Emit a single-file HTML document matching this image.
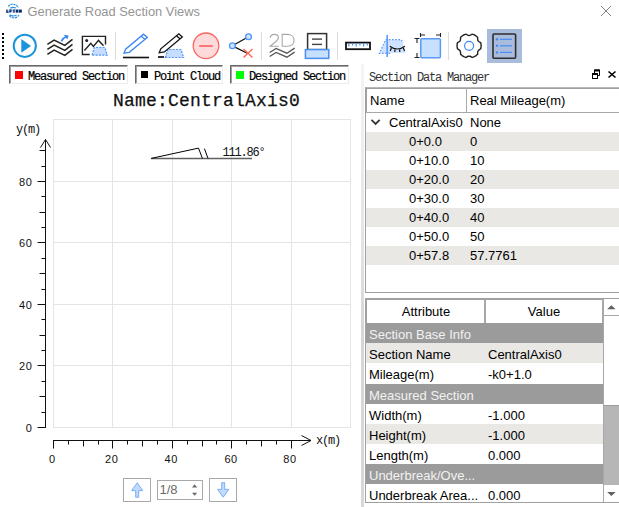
<!DOCTYPE html>
<html><head><meta charset="utf-8">
<style>
html,body{margin:0;padding:0;width:619px;height:507px;overflow:hidden;background:#fff;position:relative;font-family:"Liberation Sans",sans-serif;}
.a{position:absolute;white-space:nowrap;}
.mono{font-family:"Liberation Mono",monospace;}
svg{position:absolute;left:0;top:0;}
.leg{position:absolute;top:65px;height:17px;border-top:1px solid #6a6a6a;border-left:1px solid #6a6a6a;border-bottom:1px solid #ebebeb;border-right:1px solid #ebebeb;box-shadow:inset 1px 1px 0 #a0a0a0;background:#fff;}
.leg .sq{position:absolute;left:5px;top:5px;width:8px;height:8px;}
.leg .t{position:absolute;left:18px;top:3px;font:12px "Liberation Mono",monospace;letter-spacing:-1.2px;color:#000;line-height:16px;-webkit-text-stroke:0.2px #000;}
.lbl{font:12px "Liberation Mono",monospace;letter-spacing:-1.2px;color:#111;line-height:14px;}
.tt{font-size:13px;line-height:15px;color:#000;}
.num{font:11px "Liberation Sans",sans-serif;color:#111;line-height:14px;letter-spacing:0.6px;}
</style></head><body>
<!-- title bar -->
<svg width="619" height="507" viewBox="0 0 619 507">
 <!-- logo -->
 <g fill="none" stroke="#2a8ee0" stroke-width="1.2">
  <path d="M8.3,6.6 C9.5,3.8 14.5,2.6 18.6,7.6" stroke-dasharray="2.2,0.8"/>
  <path d="M10.4,8.3 C11.6,7.3 14.2,7.2 15.8,8"/>
  <path d="M9.6,14.6 C11,16.2 14.5,16.5 16.5,15"/>
  <path d="M9.3,15.5 C11.5,18.8 16.5,18.8 19,15" stroke-dasharray="2.4,0.8"/>
 </g>
 <rect x="6" y="9.2" width="16" height="3.8" fill="#d6e8ff"/>
 <g fill="#0b2a66">
  <rect x="6.3" y="9.6" width="1.3" height="3"/><rect x="6.3" y="11.6" width="2.6" height="1"/>
  <rect x="9.5" y="9.6" width="2.4" height="1"/><rect x="9.5" y="9.6" width="1.1" height="3"/><rect x="9.5" y="11" width="2" height="0.9"/>
  <rect x="12.6" y="9.6" width="2.6" height="1"/><rect x="13.3" y="10.5" width="1.3" height="2.2"/>
  <rect x="15.8" y="9.6" width="2.6" height="3" /><rect x="19" y="9.6" width="2.8" height="3"/>
 </g>
 <!-- close -->
 <path d="M601,6 L611,16 M611,6 L601,16" stroke="#858585" stroke-width="1"/>
 <!-- toolbar -->
 <g fill="#000">
  <rect x="2" y="33" width="2" height="2"/><rect x="2" y="37" width="2" height="2"/><rect x="2" y="41" width="2" height="2"/><rect x="2" y="45" width="2" height="2"/><rect x="2" y="49" width="2" height="2"/><rect x="2" y="53" width="2" height="2"/><rect x="2" y="57" width="2" height="2"/>
 </g>
 <!-- play -->
 <circle cx="24.8" cy="45.8" r="11.1" fill="none" stroke="#1a94dc" stroke-width="2"/>
 <path d="M21.3,39 L31,46 L21.3,52.8Z" fill="#1a94dc"/>
 <!-- waves -->
 <g fill="none" stroke="#222" stroke-width="1.5">
  <path d="M47.4,44.4 L54.1,40.1 L64.8,45.4 L72.5,39.4"/>
  <path d="M47.4,49.4 L54.1,45.1 L64.8,50.4 L72.5,44.4"/>
  <path d="M47.4,54.4 L54.1,50.1 L64.8,55.4 L72.5,49.4"/>
 </g>
 <path d="M61.3,41.4 Q63.5,37.5 67,36.3" fill="none" stroke="#3b86f5" stroke-width="1.6"/>
 <path d="M63.8,34.8 L68.7,35.6 L67.2,39.6Z" fill="#3b86f5"/>
 <!-- image icon -->
 <g fill="none" stroke="#222" stroke-width="1.4">
  <path d="M89.7,54.5 L82.4,54.5 L82.4,36.4 L105.5,36.4 L105.5,44.4"/>
  <path d="M84.4,50.5 L90.8,43.4 L93.4,46.5 L98.5,40.4 L103.5,45.8"/>
 </g>
 <circle cx="86.7" cy="40.4" r="1.5" fill="#222"/>
 <path d="M92.1,55.2 L94.1,47.5 L104.8,47.5 L107.2,55.2Z" fill="#c7ddff" stroke="#4f95f7" stroke-width="1.2" stroke-dasharray="2,1.3"/>
 <!-- separators -->
 <g fill="#dcdcdc">
  <rect x="115" y="32" width="1" height="28"/>
  <rect x="261" y="32" width="1" height="28"/>
  <rect x="337" y="32" width="1" height="28"/>
  <rect x="448" y="32" width="1" height="28"/>
 </g>
 <!-- blue pencil -->
 <g fill="none" stroke="#3b86f5" stroke-width="1.3">
  <path d="M124,53.2 L125.6,49.2 L143.5,34.2 L147.3,37.6 L129.2,52.3Z"/>
  <path d="M141.2,36.2 L145.2,39.5"/>
 </g>
 <rect x="123" y="56.7" width="26" height="1.6" fill="#111"/>
 <!-- black pencil w/ area -->
 <path d="M165.4,57.5 L167.8,49.5 L180.9,49.5 L183.6,57.5Z" fill="#c7ddff" stroke="#4f95f7" stroke-width="1.2" stroke-dasharray="2,1.3"/>
 <g fill="none" stroke="#111" stroke-width="1.3">
  <path d="M159.2,52.8 L160.8,48.8 L178.8,33.8 L182.3,37 L164.4,52Z"/>
  <path d="M176.5,35.7 L180.2,39"/>
 </g>
 <rect x="158" y="56" width="6" height="2" fill="#333"/>
 <!-- minus circle -->
 <circle cx="206" cy="45.8" r="12.8" fill="#ffdada" stroke="#ff6464" stroke-width="1.3"/>
 <rect x="199.2" y="45" width="13.6" height="2" fill="#ff7676"/>
 <!-- node delete -->
 <g stroke="#111" stroke-width="1.3" fill="none">
  <path d="M232.4,45.8 L248.5,36.7 M232.4,45.8 L247.8,53.5"/>
 </g>
 <circle cx="248.5" cy="36.7" r="2.9" fill="#cfe2ff" stroke="#4f95f7" stroke-width="1.3"/>
 <circle cx="232.4" cy="45.8" r="2.9" fill="#cfe2ff" stroke="#4f95f7" stroke-width="1.3"/>
 <path d="M243.5,49.1 L252.5,57.5 M252.5,49.1 L243.5,57.5" stroke="#ff6a5a" stroke-width="1.4"/>
 <!-- 2D -->
 <path d="M270.1,37.9 C270.5,35.5 272.3,34.4 274.3,34.4 C276.6,34.4 278.4,35.7 278.4,37.7 C278.4,39.7 276.8,40.9 275,42.3 L270.1,46.3 L278.7,46.3 M282.2,34.4 L282.2,46.3 L287.3,46.3 C291.4,46.3 294.1,43.8 294.1,40.35 C294.1,36.9 291.4,34.4 287.3,34.4 Z" fill="none" stroke="#a8a8a8" stroke-width="1.1"/>
 <g fill="none" stroke="#555" stroke-width="1.3">
  <path d="M269.7,52.5 L276.1,48.5 L286.9,53.2 L294.6,48.1"/>
  <path d="M269.7,56.5 L276.1,52.5 L286.9,57.2 L294.6,52.1"/>
 </g>
 <!-- document -->
 <rect x="307.6" y="33.6" width="19" height="16" fill="#fff" stroke="#333" stroke-width="1.5"/>
 <rect x="312" y="38.4" width="10" height="1.4" fill="#444"/>
 <rect x="312" y="43.7" width="10" height="1.4" fill="#444"/>
 <rect x="305.4" y="49.6" width="23.4" height="8.8" fill="#c8e0ff" stroke="#4a90f0" stroke-width="1.5"/>
 <!-- ruler -->
 <rect x="346" y="42.6" width="24" height="6.6" fill="#fff" stroke="#111" stroke-width="1.8"/>
 <g fill="#4a90f0">
  <rect x="348.2" y="43.5" width="1.2" height="3"/><rect x="352" y="43.5" width="1.2" height="2"/><rect x="355.6" y="43.5" width="1.2" height="3"/><rect x="359.3" y="43.5" width="1.2" height="2"/><rect x="363" y="43.5" width="1.2" height="3"/><rect x="366.7" y="43.5" width="1.2" height="2"/>
 </g>
 <!-- eye hidden -->
 <path d="M379.4,53.5 L385.7,39.7 L401.5,39.7 L405.9,52.8 Z" fill="#cfe2ff"/>
 <path d="M390,53.3 L379.4,53.3 L385.7,39.7 L401.5,39.7 L403,43" fill="none" stroke="#4f95f7" stroke-width="1.2" stroke-dasharray="1.5,1.7"/>
 <rect x="386.4" y="35" width="1.5" height="22" fill="#4f95f7"/>
 <g fill="none" stroke="#111" stroke-width="1.2">
  <path d="M389.8,46.2 Q397.3,51.8 404.9,46.2"/>
  <path d="M391.4,48 L390.2,50.9 M395,49.4 L394.8,52 M399.6,49.4 L399.8,52 M403.3,48 L404.6,50.9"/>
 </g>
 <!-- square w dims -->
 <rect x="420.8" y="38.8" width="19.6" height="19" rx="1" fill="#c8e0ff" stroke="#5a9af5" stroke-width="1.5"/>
 <g fill="none" stroke="#222" stroke-width="1.1">
  <path d="M420.5,33 L420.5,37 M420.5,35 L425,35 M440.5,33 L440.5,37 M436,35 L440.5,35"/>
  <path d="M414.5,38.5 L419.5,38.5 M417,38.5 L417,43 M414.5,57.5 L419.5,57.5 M417,57.5 L417,53"/>
 </g>
 <!-- gear -->
 <path d="M481.1,45.8 L481.1,45.0 L481.0,44.2 L480.9,43.5 L480.7,42.7 L479.8,42.2 L479.1,41.7 L478.5,41.2 L478.0,40.6 L477.8,40.0 L477.7,39.2 L477.6,38.3 L477.6,37.3 L477.0,36.8 L476.4,36.3 L475.8,35.8 L475.1,35.4 L474.4,35.0 L473.7,34.7 L473.0,34.4 L472.2,34.2 L471.3,34.7 L470.5,35.1 L469.8,35.4 L469.1,35.5 L468.4,35.4 L467.7,35.1 L466.9,34.7 L466.0,34.2 L465.2,34.4 L464.5,34.7 L463.8,35.0 L463.1,35.4 L462.4,35.8 L461.8,36.3 L461.2,36.8 L460.6,37.3 L460.6,38.3 L460.5,39.2 L460.4,40.0 L460.2,40.6 L459.7,41.2 L459.1,41.7 L458.4,42.2 L457.5,42.7 L457.3,43.5 L457.2,44.2 L457.1,45.0 L457.1,45.8 L457.1,46.6 L457.2,47.4 L457.3,48.1 L457.5,48.9 L458.4,49.4 L459.1,49.9 L459.7,50.4 L460.2,50.9 L460.4,51.6 L460.5,52.4 L460.6,53.3 L460.6,54.3 L461.2,54.8 L461.8,55.3 L462.4,55.8 L463.1,56.2 L463.8,56.6 L464.5,56.9 L465.2,57.2 L466.0,57.4 L466.9,56.9 L467.7,56.5 L468.4,56.2 L469.1,56.1 L469.8,56.2 L470.5,56.5 L471.3,56.9 L472.2,57.4 L473.0,57.2 L473.7,56.9 L474.4,56.6 L475.1,56.2 L475.8,55.8 L476.4,55.3 L477.0,54.8 L477.6,54.3 L477.6,53.3 L477.7,52.4 L477.8,51.6 L478.0,51.0 L478.5,50.4 L479.1,49.9 L479.8,49.4 L480.7,48.9 L480.9,48.1 L481.0,47.4 L481.1,46.6Z" fill="none" stroke="#222" stroke-width="1.4"/>
 <circle cx="469.1" cy="45.8" r="4.5" fill="none" stroke="#3a8af5" stroke-width="1.2"/>
 <!-- list (active) -->
 <rect x="487" y="29" width="35" height="34" fill="#a9bcdb"/>
 <rect x="493" y="34" width="22.6" height="24.2" rx="1" fill="none" stroke="#2e2e2e" stroke-width="1.6"/>
 <g fill="#4a8af5">
  <circle cx="497" cy="39.3" r="1.25"/><circle cx="497" cy="45.8" r="1.25"/><circle cx="497" cy="52.4" r="1.25"/>
  <rect x="500" y="38.7" width="12" height="1.2"/><rect x="500" y="45.2" width="12" height="1.2"/><rect x="500" y="51.8" width="12" height="1.2"/>
 </g>
</svg>
<div class="a" style="left:27.5px;top:5px;font-size:12.9px;color:#959595;line-height:14px;">Generate Road Section Views</div>

<!-- legends -->
<div class="leg" style="left:9px;width:117px;"><div class="sq" style="background:#f00"></div><div class="t">Measured Section</div></div>
<div class="leg" style="left:135px;width:86px;"><div class="sq" style="background:#000;left:5px;top:5px;width:7px;height:7px"></div><div class="t">Point Cloud</div></div>
<div class="leg" style="left:230px;width:117px;"><div class="sq" style="background:#0f0"></div><div class="t">Designed Section</div></div>

<svg width="619" height="507" viewBox="0 0 619 507">
<path d="M53.5,119 L53.5,428 M112.5,119 L112.5,428 M172.5,119 L172.5,428 M231.5,119 L231.5,428 M291.5,119 L291.5,428 M350.5,119 L350.5,428 M53,427.5 L351,427.5 M53,365.5 L351,365.5 M53,304.5 L351,304.5 M53,242.5 L351,242.5 M53,181.5 L351,181.5 M53,119.5 L351,119.5" stroke="#e4e4e4" stroke-width="1" fill="none"/>
<path d="M45.5,139.5 L45.5,428 M37.5,427.5 L45.5,427.5 M41.5,412.5 L45.5,412.5 M39.5,396.5 L45.5,396.5 M41.5,381.5 L45.5,381.5 M37.5,365.5 L45.5,365.5 M41.5,350.5 L45.5,350.5 M39.5,335.5 L45.5,335.5 M41.5,319.5 L45.5,319.5 M37.5,304.5 L45.5,304.5 M41.5,289.5 L45.5,289.5 M39.5,273.5 L45.5,273.5 M41.5,258.5 L45.5,258.5 M37.5,242.5 L45.5,242.5 M41.5,227.5 L45.5,227.5 M39.5,212.5 L45.5,212.5 M41.5,196.5 L45.5,196.5 M37.5,181.5 L45.5,181.5 M41.5,166.5 L45.5,166.5 M39.5,150.5 L45.5,150.5 M40.5,147.5 L45.5,139.5 L50.5,147.5 M53,440.5 L311,440.5 M53.5,440.5 L53.5,448.5 M68.5,440.5 L68.5,444.5 M83.5,440.5 L83.5,446.5 M98.5,440.5 L98.5,444.5 M112.5,440.5 L112.5,448.5 M127.5,440.5 L127.5,444.5 M142.5,440.5 L142.5,446.5 M157.5,440.5 L157.5,444.5 M172.5,440.5 L172.5,448.5 M187.5,440.5 L187.5,444.5 M202.5,440.5 L202.5,446.5 M216.5,440.5 L216.5,444.5 M231.5,440.5 L231.5,448.5 M246.5,440.5 L246.5,444.5 M261.5,440.5 L261.5,446.5 M276.5,440.5 L276.5,444.5 M291.5,440.5 L291.5,448.5 M301.5,435.5 L311,440.5 L301.5,445.5" stroke="#111" stroke-width="1" fill="none"/>
<path d="M151.2,158.5 L252,158.5" stroke="#606060" stroke-width="1.6"/>
<path d="M151.2,158.4 L198.5,148.1 L202.4,158.4 M204.4,148.6 L208,158.4" stroke="#000" stroke-width="1" fill="none"/>
</svg>
<!-- chart labels -->
<div class="a mono" style="left:113px;top:91px;font-size:18px;-webkit-text-stroke:0.25px #111;line-height:20px;letter-spacing:0.2px;color:#111;">Name:CentralAxis0</div>
<div class="a lbl" style="left:16px;top:122.5px;">y(m)</div>
<div class="a num" style="left:0px;top:175px;width:32.5px;text-align:right;">80</div>
<div class="a num" style="left:0px;top:236px;width:32.5px;text-align:right;">60</div>
<div class="a num" style="left:0px;top:298px;width:32.5px;text-align:right;">40</div>
<div class="a num" style="left:0px;top:359px;width:32.5px;text-align:right;">20</div>
<div class="a num" style="left:0px;top:421px;width:32.5px;text-align:right;">0</div>
<div class="a num" style="left:32.3px;top:452px;width:40px;text-align:center;">0</div>
<div class="a num" style="left:91.7px;top:452px;width:40px;text-align:center;">20</div>
<div class="a num" style="left:151.2px;top:452px;width:40px;text-align:center;">40</div>
<div class="a num" style="left:211.1px;top:452px;width:40px;text-align:center;">60</div>
<div class="a num" style="left:269.9px;top:452px;width:40px;text-align:center;">80</div>
<div class="a lbl" style="left:316px;top:434px;">x(m)</div>
<div class="a lbl" style="left:222.5px;top:146px;">111.86&deg;</div>
<!-- pager -->
<div class="a" style="left:123px;top:478px;width:26px;height:22px;border:1px solid #a8a8a8;"></div>
<svg width="619" height="507" viewBox="0 0 619 507">
 <path d="M131.6,490.6 L137.2,482.8 L142.8,490.6 L138.7,490.6 L138.7,497.3 L135.7,497.3 L135.7,490.6Z" fill="#c2dafc" stroke="#6fa8f6" stroke-width="0.9"/>
 <path d="M217.6,489.4 L223.2,497.2 L228.8,489.4 L224.7,489.4 L224.7,482.7 L221.7,482.7 L221.7,489.4Z" fill="#c2dafc" stroke="#6fa8f6" stroke-width="0.9"/>
 <path d="M192,487.4 L194.6,484.3 L197.2,487.4Z M192,492.7 L194.6,495.8 L197.2,492.7Z" fill="#6a6a6a"/>
</svg>
<div class="a" style="left:157px;top:480px;width:44px;height:18px;border:1px solid #a8a8a8;"></div>
<div class="a" style="left:159.5px;top:482px;font-size:13px;color:#6a6a6a;line-height:16px;">1/8</div>
<div class="a" style="left:209px;top:478px;width:26px;height:22px;border:1px solid #a8a8a8;"></div>

<!-- splitter -->
<div class="a" style="left:361px;top:64px;width:3px;height:443px;background:linear-gradient(#f5f5f5,#e4e4e4 40%,#d6d6d6 60%,#d8d8d8);"></div>
<!-- right panel title -->
<div class="a mono" style="left:369px;top:71px;font-size:12px;letter-spacing:-1.2px;color:#333;line-height:14px;">Section Data Manager</div>
<svg width="619" height="507" viewBox="0 0 619 507">
 <path d="M594.5,75.5 L594.5,70 L599.5,70 L599.5,75.5 L598,75.5" fill="none" stroke="#000" stroke-width="1"/>
 <rect x="594" y="69.5" width="6" height="2" fill="#000"/>
 <rect x="592.5" y="73.5" width="5" height="5" fill="#fff" stroke="#000" stroke-width="1"/>
 <rect x="592" y="73" width="6" height="2" fill="#000"/>
 <path d="M608.5,71.5 L615.5,77.5 M615.5,71.5 L608.5,77.5" stroke="#000" stroke-width="1.6"/>
</svg>
<!-- tree -->
<div class="a" style="left:365px;top:87px;width:260px;height:204px;border-top:1px solid #b8b8b8;border-left:1px solid #a0a0a0;border-bottom:1px solid #a0a0a0;background:#fff;"></div>
<div class="a" style="left:366px;top:113px;width:253px;height:19px;background:#fff"></div>
<div class="a tt" style="left:389px;top:115px;">CentralAxis0</div>
<div class="a tt" style="left:470px;top:115px;">None</div>
<div class="a" style="left:366px;top:132px;width:253px;height:19px;background:#e9e8e5"></div>
<div class="a tt" style="left:409px;top:134px;">0+0.0</div>
<div class="a tt" style="left:470px;top:134px;">0</div>
<div class="a" style="left:366px;top:151px;width:253px;height:19px;background:#fff"></div>
<div class="a tt" style="left:409px;top:153px;">0+10.0</div>
<div class="a tt" style="left:470px;top:153px;">10</div>
<div class="a" style="left:366px;top:170px;width:253px;height:19px;background:#e9e8e5"></div>
<div class="a tt" style="left:409px;top:172px;">0+20.0</div>
<div class="a tt" style="left:470px;top:172px;">20</div>
<div class="a" style="left:366px;top:189px;width:253px;height:19px;background:#fff"></div>
<div class="a tt" style="left:409px;top:191px;">0+30.0</div>
<div class="a tt" style="left:470px;top:191px;">30</div>
<div class="a" style="left:366px;top:208px;width:253px;height:19px;background:#e9e8e5"></div>
<div class="a tt" style="left:409px;top:210px;">0+40.0</div>
<div class="a tt" style="left:470px;top:210px;">40</div>
<div class="a" style="left:366px;top:227px;width:253px;height:19px;background:#fff"></div>
<div class="a tt" style="left:409px;top:229px;">0+50.0</div>
<div class="a tt" style="left:470px;top:229px;">50</div>
<div class="a" style="left:366px;top:246px;width:253px;height:19px;background:#e9e8e5"></div>
<div class="a tt" style="left:409px;top:248px;">0+57.8</div>
<div class="a tt" style="left:470px;top:248px;">57.7761</div>
<div class="a" style="left:366px;top:88px;width:253px;height:24px;border-bottom:1px solid #a8a8a8;box-shadow:inset 1px 1px 0 #a0a0a0;background:#fff;"></div>
<div class="a" style="left:466px;top:88px;width:1px;height:24px;background:#a8a8a8;"></div>
<div class="a tt" style="left:370px;top:93px;">Name</div>
<div class="a tt" style="left:470px;top:93px;">Real Mileage(m)</div>
<svg width="619" height="507" viewBox="0 0 619 507"><path d="M371.5,119.8 L375.6,123.9 L379.7,119.8" fill="none" stroke="#333" stroke-width="1.8"/></svg>
<!-- attribute table -->
<div class="a" style="left:365px;top:298px;width:260px;height:203px;border-top:1px solid #a0a0a0;border-left:1px solid #a0a0a0;border-bottom:1px solid #a0a0a0;background:#fff;"></div>
<div class="a" style="left:366px;top:299px;width:237px;height:24px;border-top:1px solid #a0a0a0;border-left:1px solid #a0a0a0;background:#fff;box-sizing:border-box;"></div>
<div class="a" style="left:484px;top:299px;width:2px;height:24px;background:#a8a8a8;"></div>
<div class="a" style="left:602px;top:299px;width:2px;height:24px;background:#a8a8a8;"></div>
<div class="a tt" style="left:367px;top:304px;width:118px;text-align:center;">Attribute</div>
<div class="a tt" style="left:486px;top:304px;width:116px;text-align:center;">Value</div>
<div class="a" style="left:366px;top:323px;width:237px;height:20px;background:#9b9b9b"></div>
<div class="a tt" style="left:369px;top:327px;color:#f2f2f2">Section Base Info</div>
<div class="a" style="left:366px;top:343px;width:237px;height:20px;background:#e9e8e5"></div>
<div class="a tt" style="left:369px;top:347px;color:#000">Section Name</div>
<div class="a tt" style="left:488px;top:347px;">CentralAxis0</div>
<div class="a" style="left:366px;top:363px;width:237px;height:21px;background:#fff"></div>
<div class="a tt" style="left:369px;top:367px;color:#000">Mileage(m)</div>
<div class="a tt" style="left:488px;top:367px;">-k0+1.0</div>
<div class="a" style="left:366px;top:384px;width:237px;height:20px;background:#9b9b9b"></div>
<div class="a tt" style="left:369px;top:388px;color:#f2f2f2">Measured Section</div>
<div class="a" style="left:366px;top:404px;width:237px;height:20px;background:#fff"></div>
<div class="a tt" style="left:369px;top:408px;color:#000">Width(m)</div>
<div class="a tt" style="left:488px;top:408px;">-1.000</div>
<div class="a" style="left:366px;top:424px;width:237px;height:20px;background:#e9e8e5"></div>
<div class="a tt" style="left:369px;top:428px;color:#000">Height(m)</div>
<div class="a tt" style="left:488px;top:428px;">-1.000</div>
<div class="a" style="left:366px;top:444px;width:237px;height:20px;background:#fff"></div>
<div class="a tt" style="left:369px;top:448px;color:#000">Length(m)</div>
<div class="a tt" style="left:488px;top:448px;">0.000</div>
<div class="a" style="left:366px;top:464px;width:237px;height:20px;background:#9b9b9b"></div>
<div class="a tt" style="left:369px;top:468px;color:#f2f2f2">Underbreak/Ove...</div>
<div class="a" style="left:366px;top:484px;width:237px;height:18px;background:#fff"></div>
<div class="a tt" style="left:369px;top:488px;color:#000">Underbreak Area...</div>
<div class="a tt" style="left:488px;top:488px;">0.000</div>
<div class="a" style="left:603px;top:323px;width:1px;height:179px;background:#a8a8a8;"></div>
<!-- scrollbar -->
<div class="a" style="left:604px;top:315px;width:15px;height:1px;background:#a8a8a8;"></div>
<div class="a" style="left:604px;top:405px;width:15px;height:80px;background:#b6b6b6;border-top:1px solid #9c9c9c;box-sizing:border-box;"></div>
<svg width="619" height="507" viewBox="0 0 619 507">
 <path d="M607.2,309.3 L611.4,305.2 L615.6,309.3Z" fill="#606060"/>
 <path d="M607.2,492 L611.4,496.1 L615.6,492Z" fill="#606060"/>
</svg>
</body></html>
